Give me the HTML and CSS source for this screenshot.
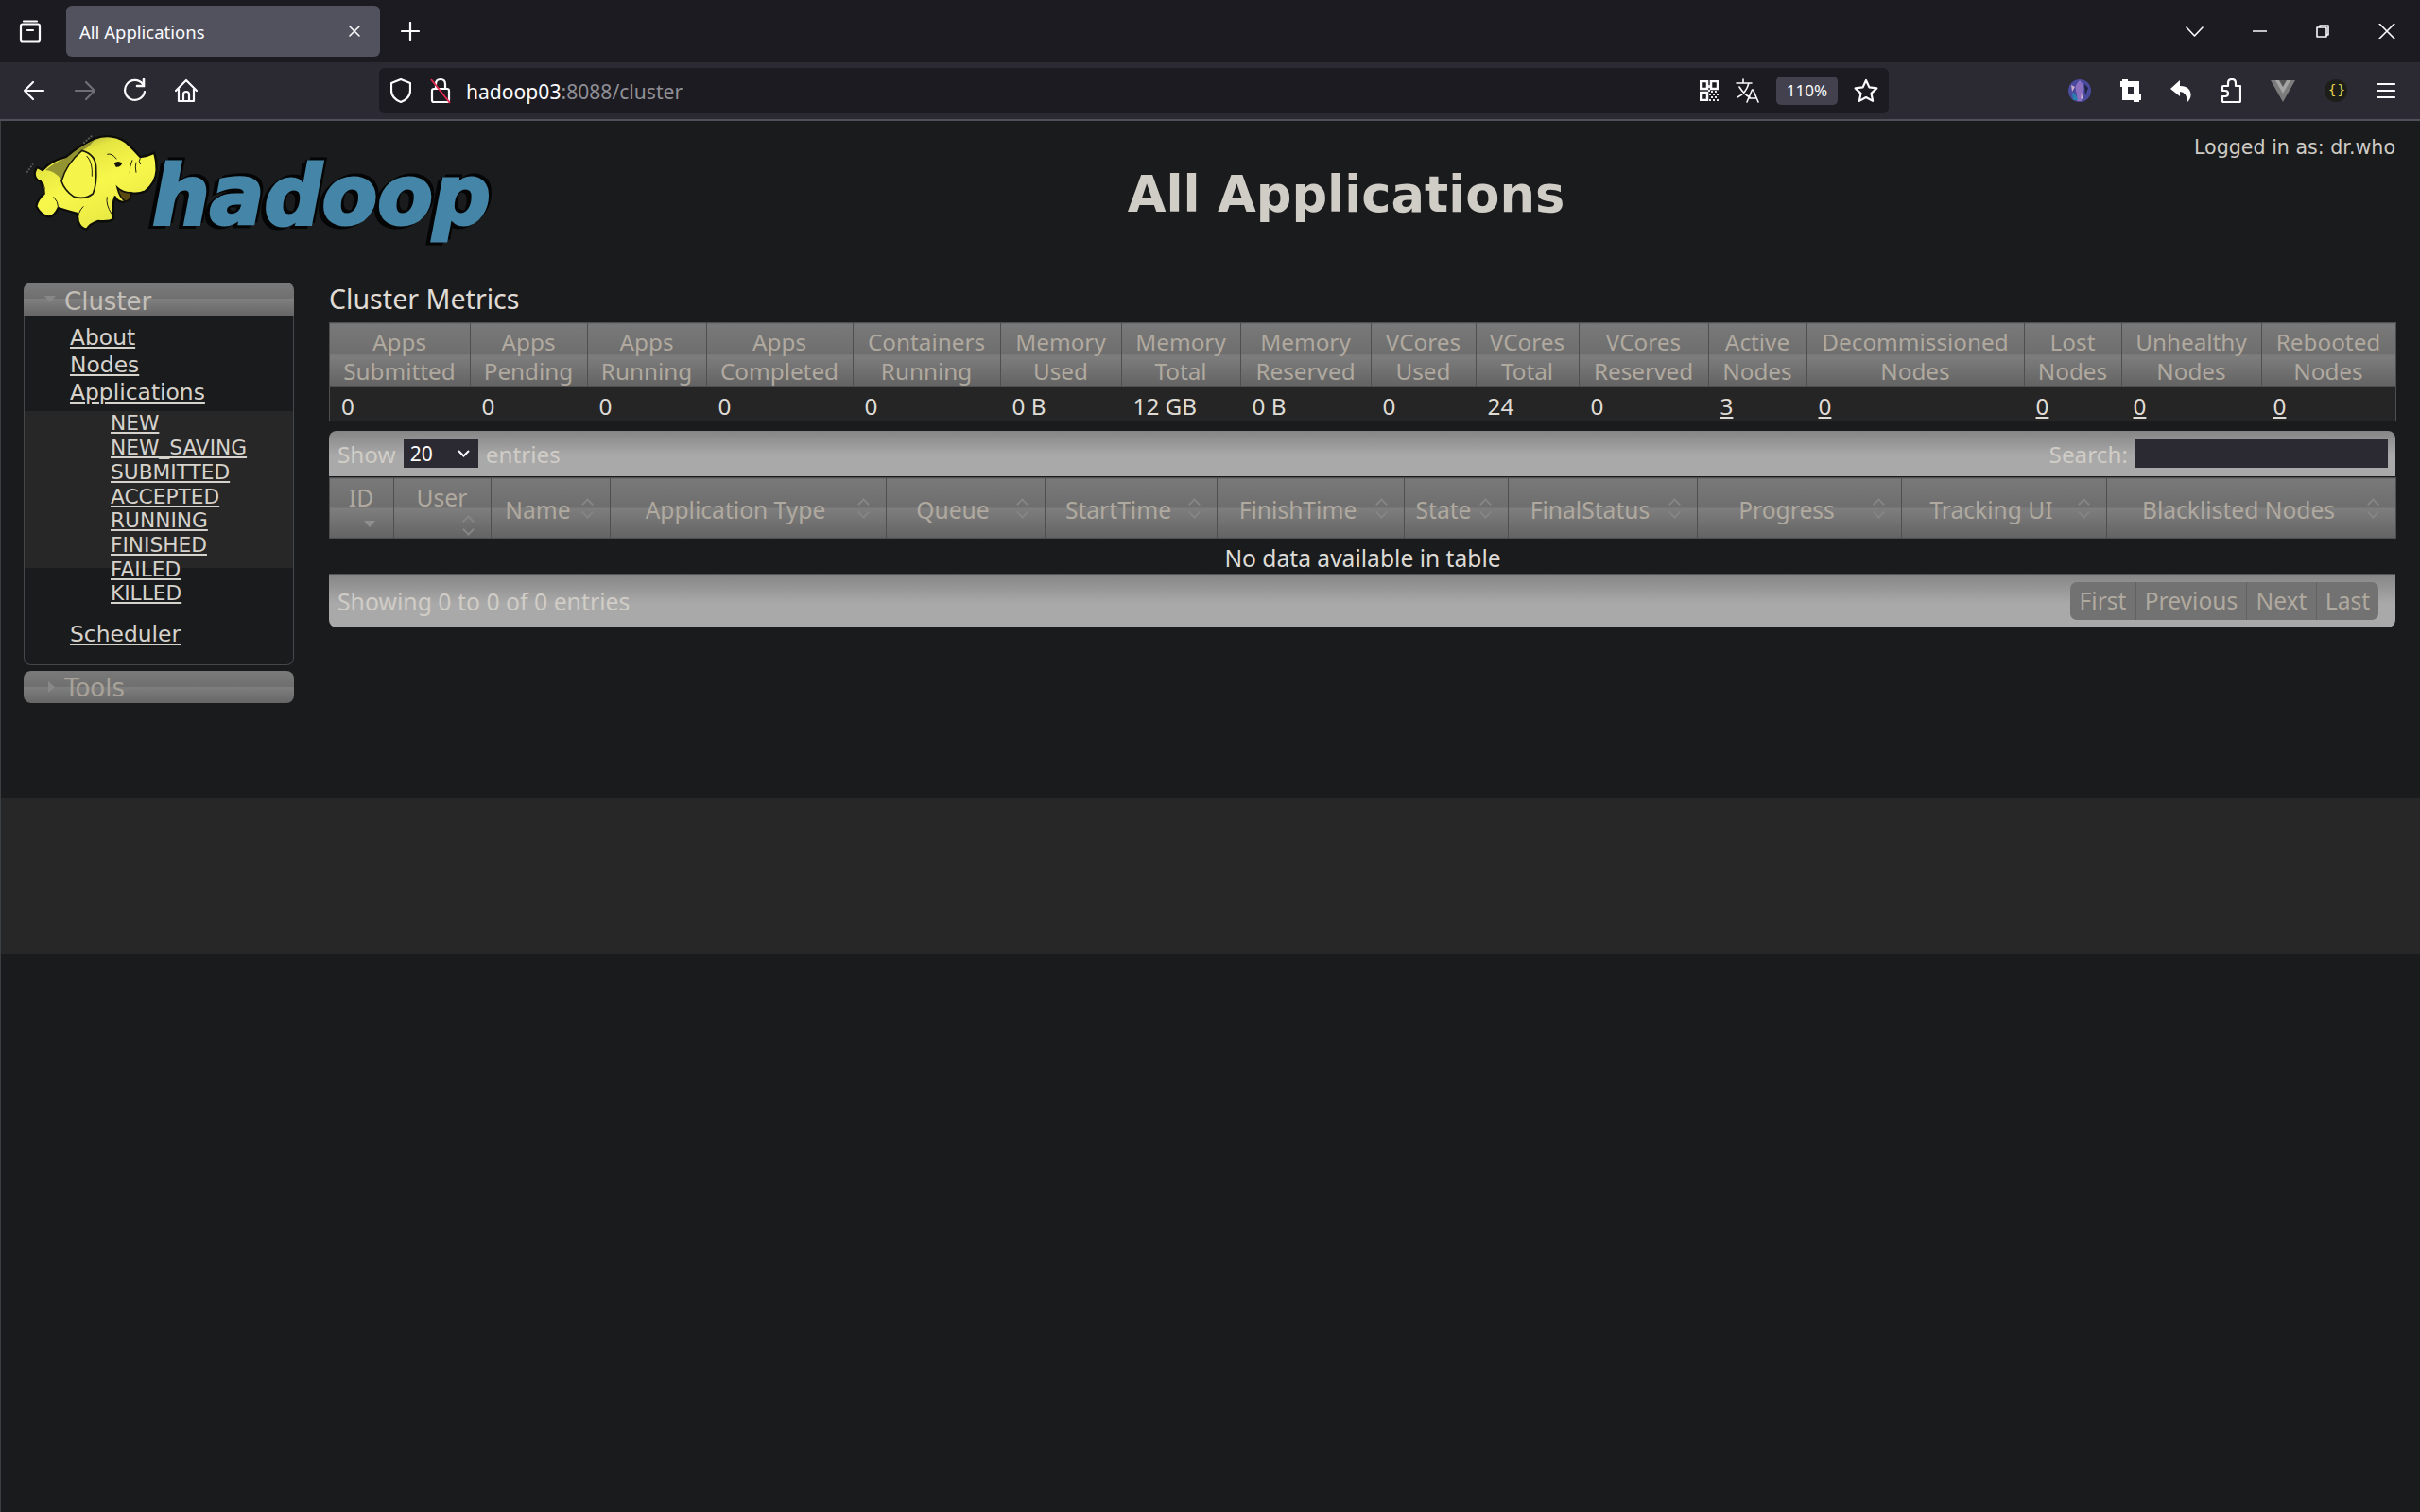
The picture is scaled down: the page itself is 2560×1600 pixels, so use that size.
FILE: index.html
```html
<!doctype html>
<html>
<head>
<title>All Applications</title>
<meta charset="utf-8">
<link rel="stylesheet" href="styles.css">
</head>
<body>
<!-- browser frame -->
<div class="tabstrip">
	<div class="tabside">
		<svg width="24" height="26" viewBox="0 0 24 26" class="ic"><path d="M5 2.500h14M2 7.500q0-2 2-2h16q2 0 2 2v14q0 2-2 2H4q-2 0-2-2zM9 12h6"/></svg>
	</div>
	<div class="tab">
		<span class="tabtitle">All Applications</span>
		<svg width="14" height="14" viewBox="0 0 14 14" class="ic thin"><path d="M2 2l10 10M12 2L2 12"/></svg>
	</div>
	<svg width="20" height="20" viewBox="0 0 20 20" class="ic newtab"><path d="M10 1v18M1 10h18"/></svg>
	<div class="winbtns">
		<svg width="19" height="11" viewBox="0 0 19 11" class="ic thin"><path d="M1 1l8.500 9L18 1"/></svg>
		<svg width="15" height="2" viewBox="0 0 15 2" class="ic thin"><path d="M0 1h15"/></svg>
		<svg width="14" height="14" viewBox="0 0 14 14" class="ic thin"><path d="M4 3V1h9v10h-2M1 3h10v10H1z"/></svg>
		<svg width="18" height="16" viewBox="0 0 18 16" class="ic thin"><path d="M1 0l16 16M17 0L1 16"/></svg>
	</div>
</div>
<div class="toolbar">
	<div class="navbtns">
		<svg width="24" height="22" viewBox="0 0 24 22" class="ic"><path d="M22 11H2M11 2l-9 9 9 9"/></svg>
		<svg width="24" height="22" viewBox="0 0 24 22" class="ic off"><path d="M2 11h20M13 2l9 9-9 9"/></svg>
		<svg width="24" height="26" viewBox="0 0 24 26" class="ic"><path d="M20 6a10.500 10.500 0 1 0 2 8"/><path d="M21 1v7h-7" class="solid"/></svg>
		<svg width="24" height="26" viewBox="0 0 24 26" class="ic"><path d="M1 13L12 2l11 11M4 11v13h16V11M9 24v-7q0-3 3-3t3 3v7"/></svg>
	</div>
	<div class="urlbar">
		<svg width="22" height="26" viewBox="0 0 22 26" class="ic"><path d="M11 1l10 4v8q0 8-10 12Q1 21 1 13V5z"/></svg>
		<svg width="22" height="28" viewBox="0 0 22 28" class="lock"><path d="M4 12h14q2 0 2 2v10q0 2-2 2H4q-2 0-2-2V14q0-2 2-2zM6 12V7q0-5 5-5t5 5v5" class="lockbody"/><path d="M1 2l20 25" class="lockslash"/></svg>
		<span class="url"><b>hadoop03</b>:8088/cluster</span>
		<svg width="20" height="22" viewBox="0 0 20 22" class="qr"><path d="M1 1h7v8H1zM12 1h7v8h-7zM1 13h7v8H1z" class="qrbox"/><path d="M9 5h2v3H9zM9 10h2v2H9zM12 11h2v2h-2zM16 11h2v2h-2zM10 14h2v2h-2zM14 14h2v2h-2zM18 14h2v2h-2zM12 17h2v2h-2zM16 17h2v2h-2zM10 20h2v2h-2zM14 20h2v2h-2zM18 20h2v2h-2z" class="qrdot"/></svg>
		<svg width="26" height="26" viewBox="0 0 26 26" class="ic thin trans"><path d="M1 5h16M8 1v4M14 5Q11 16 2 20M4 9q5 8 11 11M12 25l5.500-13h1l5.500 13M14 21h8"/></svg>
		<span class="zoompill">110%</span>
		<svg width="26" height="26" viewBox="0 0 26 26" class="ic star"><path d="M13 2l3.400 7.400 8 1-5.900 5.500 1.600 8L13 20l-7.100 3.900 1.600-8L1.600 10.400l8-1z"/></svg>
	</div>
	<div class="addons">
		<svg width="24" height="24" viewBox="0 0 24 24"><circle cx="12" cy="12" r="12" fill="#4a4a9c"/><path d="M12 1q6 6 4 12t-2 10h-5q1-6-1-11t4-11z" fill="#8a6fc0"/><path d="M4 14q4 0 6 8H5z" fill="#2a7fb0"/><path d="M17 5l4 4-3 8z" fill="#1d2340"/><path d="M3 6l4 2-3 5zM14 14l2 8-3-2z" fill="#c9a8c8"/></svg>
		<svg width="22" height="24" viewBox="0 0 22 24" class="crop"><path d="M5 0v19h17M0 5h17v19" /></svg>
		<svg width="22" height="24" viewBox="0 0 22 24"><path d="M10 1L0 10l10 8v-5q7 0 8 11 6-6 2-13-3-4-10-4z" fill="#fff"/></svg>
		<svg width="22" height="26" viewBox="0 0 22 26" class="ic"><path d="M8 5q0-4 4-4t4 4v3h5v16q0 1-1 1H3q-1 0-1-1v-5h3q3 0 3-3t-3-3H2V9q0-1 1-1h5z"/></svg>
		<svg width="26" height="24" viewBox="0 0 26 24"><path d="M0 1h26L13 24z" fill="#7c7c7c"/><path d="M6 1h14l-7 12z" fill="#555"/><path d="M5 1h4l4 7 4-7h4l-8 14z" fill="#a5a5a5"/></svg>
		<span class="jsonbtn">{ }</span>
		<svg width="20" height="18" viewBox="0 0 20 18" class="ic"><path d="M1 2h18M1 9h18M1 16h18"/></svg>
	</div>
</div>

<!-- the page -->
<div class="page">
	<div class="header">
		<svg class="logo" width="520" height="140" viewBox="0 0 520 140">
			<defs>
				<linearGradient id="hide" x1="0" y1="0" x2="0.5" y2="1">
					<stop offset="0" stop-color="#7f7f30"/>
					<stop offset="0.3" stop-color="#e6e642"/>
					<stop offset="0.6" stop-color="#f7f74b"/>
					<stop offset="1" stop-color="#e8e844"/>
				</linearGradient>
			</defs>
			<text x="141" y="107" textLength="358" lengthAdjust="spacingAndGlyphs" class="hadoop">hadoop</text>
			<g transform="scale(0.3333)">
				<path class="hide" d="M430 95Q437 120 437 150Q435 190 400 218Q375 228 355 222Q358 245 330 252Q312 250 305 235Q296 255 300 305Q290 315 250 312Q225 320 215 338Q195 335 188 312L184 288Q150 278 125 270Q115 295 95 298Q70 295 55 265Q58 245 80 225Q76 195 68 185Q50 182 50 160Q55 140 60 142L75 150Q100 120 150 108Q195 70 240 50Q295 30 340 62Q365 85 385 108Q410 105 430 95z"/>
				<path class="shade" d="M85 150Q115 125 150 112Q195 75 240 55Q215 85 195 90Q150 125 135 180Q110 150 85 150z"/>
				<path class="ear" d="M200 88Q245 100 245 145Q248 195 235 225Q210 245 175 235Q145 215 135 185Q150 130 200 88z"/>
				<path class="crease" d="M360 118Q350 140 352 160M372 125Q368 140 372 158M385 112Q378 122 386 132M280 100Q295 95 310 115M215 105Q235 125 232 170M295 290Q275 260 280 235M188 312Q185 285 205 265M125 270Q125 250 110 235M80 225Q85 205 76 190"/>
				<path class="eye" d="M302 128Q315 118 328 128Q322 142 308 140z"/>
				<path class="mouth" d="M312 205Q320 240 340 250Q358 240 355 222Q330 222 312 205z"/>
				<path class="hair" d="M205 65L235 38M25 158L45 130"/>
			</g>
		</svg>
		<h1 class="title">All Applications</h1>
		<div class="login">Logged in as: dr.who</div>
	</div>

	<div class="layout">
		<div class="nav">
			<div class="navhead"><i class="tri-down"></i>Cluster</div>
			<div class="navbody">
				<ul class="links">
					<li><a href="#">About</a></li>
					<li><a href="#">Nodes</a></li>
					<li><a href="#">Applications</a></li>
				</ul>
				<ul class="states">
					<li><a href="#">NEW</a></li>
					<li><a href="#">NEW_SAVING</a></li>
					<li><a href="#">SUBMITTED</a></li>
					<li><a href="#">ACCEPTED</a></li>
					<li><a href="#">RUNNING</a></li>
					<li><a href="#">FINISHED</a></li>
					<li><a href="#">FAILED</a></li>
					<li><a href="#">KILLED</a></li>
				</ul>
				<ul class="links">
					<li><a href="#">Scheduler</a></li>
				</ul>
			</div>
			<div class="navhead closed"><i class="tri-right"></i>Tools</div>
		</div>

		<div class="main">
			<div class="caption">Cluster Metrics</div>
			<table class="grid metrics">
				<colgroup>
					<col style="width:149px"><col style="width:124px"><col style="width:126px"><col style="width:155px"><col style="width:156px"><col style="width:128px"><col style="width:126px"><col style="width:138px"><col style="width:111px"><col style="width:109px"><col style="width:137px"><col style="width:104px"><col style="width:230px"><col style="width:103px"><col style="width:148px"><col style="width:142px">
				</colgroup>
				<thead>
					<tr>
						<th>Apps<br>Submitted</th><th>Apps<br>Pending</th><th>Apps<br>Running</th><th>Apps<br>Completed</th>
						<th>Containers<br>Running</th><th>Memory<br>Used</th><th>Memory<br>Total</th><th>Memory<br>Reserved</th>
						<th>VCores<br>Used</th><th>VCores<br>Total</th><th>VCores<br>Reserved</th><th>Active<br>Nodes</th>
						<th>Decommissioned<br>Nodes</th><th>Lost<br>Nodes</th><th>Unhealthy<br>Nodes</th><th>Rebooted<br>Nodes</th>
					</tr>
				</thead>
				<tbody>
					<tr>
						<td>0</td><td>0</td><td>0</td><td>0</td><td>0</td><td>0 B</td><td>12 GB</td><td>0 B</td><td>0</td><td>24</td><td>0</td>
						<td><a href="#">3</a></td><td><a href="#">0</a></td><td><a href="#">0</a></td><td><a href="#">0</a></td><td><a href="#">0</a></td>
					</tr>
				</tbody>
			</table>

			<div class="tablebar top">
				<div class="barleft">Show <span class="lenbox">20<svg width="13" height="8" viewBox="0 0 13 8"><path d="M1 1l5.500 5.500L12 1"/></svg></span> entries</div>
				<div class="barright">Search: <span class="searchbox"></span></div>
			</div>
			<table class="grid apps">
				<colgroup>
					<col style="width:68px"><col style="width:103px"><col style="width:126px"><col style="width:292px"><col style="width:168px"><col style="width:182px"><col style="width:198px"><col style="width:110px"><col style="width:200px"><col style="width:216px"><col style="width:217px"><col style="width:306px">
				</colgroup>
				<thead>
					<tr>
						<th class="wrap">ID<i class="sort-desc"></i></th>
						<th class="wrap">User<i class="sort"></i></th>
						<th>Name<i class="sort"></i></th>
						<th>Application Type<i class="sort"></i></th>
						<th>Queue<i class="sort"></i></th>
						<th>StartTime<i class="sort"></i></th>
						<th>FinishTime<i class="sort"></i></th>
						<th>State<i class="sort"></i></th>
						<th>FinalStatus<i class="sort"></i></th>
						<th>Progress<i class="sort"></i></th>
						<th>Tracking UI<i class="sort"></i></th>
						<th>Blacklisted Nodes<i class="sort"></i></th>
					</tr>
				</thead>
				<tbody>
					<tr><td colspan="12" class="empty">No data available in table</td></tr>
				</tbody>
			</table>
			<div class="tablebar bottom">
				<div class="barleft">Showing 0 to 0 of 0 entries</div>
				<div class="pager"><span class="pg-first">First</span><span class="pg-prev">Previous</span><span class="pg-next">Next</span><span class="pg-last">Last</span></div>
			</div>
		</div>
	</div>

	<div class="footband"></div>
</div>
</body>
</html>
```

FILE: styles.css
```css
html, body {
	margin: 0;
	padding: 0;
	background: #1a1b1d;
}

body {
	width: 2560px;
	height: 1600px;
	overflow: hidden;
	font-family: "DejaVu Sans", sans-serif;
	color: #e0dcd5;
}

a {
	color: #e0dcd5;
}

ul {
	list-style: none;
	margin: 0;
	padding: 0;
}

/* icons */
.ic {
	fill: none;
	stroke: #fbfbfe;
	stroke-width: 2.2;
	stroke-linejoin: round;
	stroke-linecap: round;
}
.ic.thin {
	stroke-width: 1.6;
}
.ic.off {
	stroke: #6f6e75;
}
.ic .solid {
	stroke-width: 2.6;
	stroke-linejoin: miter;
}

/* tab strip */
.tabstrip {
	height: 66px;
	background: #1c1b22;
	display: flex;
	align-items: center;
	font-family: "Noto Sans", sans-serif;
}
.tabside {
	width: 63px;
	height: 66px;
	border-right: 1px solid #46454d;
	display: flex;
	align-items: center;
	justify-content: center;
}
.tab {
	width: 332px;
	height: 54px;
	margin-left: 6px;
	box-sizing: border-box;
	padding: 0 20px 0 14px;
	background: #52525e;
	border-radius: 6px;
	display: flex;
	align-items: center;
	justify-content: space-between;
	color: #fbfbfe;
	font-size: 18.500px;
}
.newtab {
	margin-left: 22px;
}
.winbtns {
	margin-left: auto;
	padding-right: 26px;
	display: flex;
	align-items: center;
	gap: 52px;
}

/* nav toolbar */
.toolbar {
	height: 60px;
	background: #2b2a33;
	border-bottom: 2px solid #50505a;
	display: flex;
	align-items: center;
	font-family: "Noto Sans", sans-serif;
}
.navbtns {
	width: 401px;
	box-sizing: border-box;
	padding-left: 24px;
	display: flex;
	align-items: center;
	gap: 29.500px;
}
.urlbar {
	width: 1597px;
	height: 48px;
	box-sizing: border-box;
	padding: 0 11px 0 12px;
	background: #1c1b22;
	border-radius: 6px;
	display: flex;
	align-items: center;
}
.lock {
	margin-left: 20px;
}
.lockbody {
	fill: none;
	stroke: #fbfbfe;
	stroke-width: 2.2;
}
.lockslash {
	stroke: #e22850;
	stroke-width: 2;
}
.url {
	margin-left: 16px;
	font-size: 21.100px;
	color: #8f8f96;
}
.url b {
	font-weight: 400;
	color: #fbfbfe;
}
.qr {
	margin-left: auto;
}
.qrbox {
	fill: none;
	stroke: #fbfbfe;
	stroke-width: 2.5;
}
.qrdot {
	fill: #e8e8e8;
}
.trans {
	margin-left: 18px;
}
.zoompill {
	width: 65px;
	height: 30px;
	margin-left: 17px;
	background: #42414d;
	border-radius: 5px;
	color: #fbfbfe;
	font-size: 17px;
	line-height: 30px;
	text-align: center;
}
.star {
	margin-left: 17px;
}
.addons {
	width: 562px;
	box-sizing: border-box;
	padding: 0 26px 0 190px;
	display: flex;
	align-items: center;
	justify-content: space-between;
}
.crop {
	fill: none;
	stroke: #fff;
	stroke-width: 6;
}
.jsonbtn {
	width: 24px;
	height: 24px;
	border-radius: 50%;
	background: #1d1d1a;
	color: #e8d44d;
	font-family: "DejaVu Sans", sans-serif;
	font-size: 14px;
	letter-spacing: -2px;
	line-height: 23px;
	text-align: center;
}

/* page */
.page {
	border-left: 1px solid #3a3f44;
	height: 1472px;
	display: flex;
	flex-direction: column;
}
.header {
	height: 171px;
	display: flex;
	align-items: flex-start;
}
.logo {
	flex: none;
	margin-top: 2px;
	margin-left: 19px;
	margin-right: -15px;
}
.hide {
	fill: url(#hide);
	stroke: #0c0c08;
	stroke-width: 7;
	stroke-linejoin: round;
}
.shade {
	fill: #77772c;
	opacity: 0.75;
}
.ear {
	fill: #f4f44a;
	stroke: #1a1a0c;
	stroke-width: 5;
}
.crease {
	fill: none;
	stroke: #23230f;
	stroke-width: 3;
}
.eye {
	fill: #14140a;
}
.mouth {
	fill: #5a4a12;
	stroke: #12120a;
	stroke-width: 5;
}
.hair {
	fill: none;
	stroke: #55574f;
	stroke-width: 6;
	stroke-dasharray: 6 4;
}
.hadoop {
	font-family: "DejaVu Sans", sans-serif;
	font-weight: 700;
	font-style: oblique;
	font-size: 88px;
	fill: #4586a8;
	stroke: #4586a8;
	stroke-width: 3;
	filter: drop-shadow(-5px 3px 0 #050505) drop-shadow(3px -3px 0 #050505);
}
.title {
	flex: 1;
	margin: 50px 0 0 0;
	padding-left: 2px;
	font-size: 52.700px;
	line-height: 56px;
	font-weight: 700;
	text-align: center;
	color: #d0ccc6;
}
.login {
	flex: none;
	margin-top: 15px;
	margin-right: 26px;
	font-size: 20.600px;
	line-height: 26px;
	color: #cfcbc5;
}

.layout {
	display: flex;
	align-items: flex-start;
	height: 545px;
}

/* left accordion */
.nav {
	width: 286px;
	margin-left: 24px;
}
.nav a {
	color: #d6d2cc;
}
.navhead {
	height: 35px;
	box-sizing: border-box;
	padding-left: 43px;
	border-radius: 8px 8px 0 0;
	background: linear-gradient(#7a7a7a 0, #6f6f6f 50%, #7f7f7f 50%, #666 100%);
	font-size: 26px;
	line-height: 40px;
	color: #c4bfb8;
	position: relative;
}
.navhead.closed {
	margin-top: 6px;
	height: 34px;
	border-radius: 8px;
	color: #a8a299;
	line-height: 37px;
}
.tri-down {
	position: absolute;
	left: 22px;
	top: 14px;
	border: 6px solid transparent;
	border-top: 7px solid #888;
}
.tri-right {
	position: absolute;
	left: 26px;
	top: 11px;
	border: 6px solid transparent;
	border-left: 7px solid #888;
}
.navbody {
	height: 370px;
	box-sizing: border-box;
	padding-top: 9px;
	border: 1px solid #45484b;
	border-top: 0;
	border-radius: 0 0 8px 8px;
}
.links {
	padding-left: 48px;
	font-size: 23.400px;
	line-height: 28.800px;
}
.states {
	height: 166px;
	margin: 9px 0 56px;
	padding-left: 91px;
	background: #272727;
	font-size: 21.700px;
	line-height: 25.700px;
}
.states li:first-child {
	margin-top: -3px;
}

/* right side */
.main {
	width: 2186px;
	margin-left: 37px;
	font-family: "Noto Sans", sans-serif;
}
.caption {
	height: 42px;
	font-size: 28.600px;
	line-height: 33px;
	color: #e0dcd5;
}
.grid {
	width: 2186px;
	table-layout: fixed;
	border-collapse: collapse;
	font-size: 24.300px;
}
.grid th {
	position: relative;
	padding: 0;
	font-weight: 400;
	color: #b0a99f;
	text-align: center;
	background: linear-gradient(#797979 0, #6e6e6e 49%, #7e7e7e 50%, #636363 100%);
	border: 1px solid #4d4f51;
}
.grid td {
	padding: 5px 0 0 12px;
	font-size: 24.300px;
	line-height: 31px;
	color: #dedbd6;
}
.metrics th {
	height: 63px;
	padding: 3px 1px 0 0;
	line-height: 31px;
}
.metrics td {
	background: #252525;
	border-bottom: 1px solid #4d4f51;
}
.metrics td:first-child {
	border-left: 1px solid #4d4f51;
}
.metrics td:last-child {
	border-right: 1px solid #4d4f51;
}
.apps th {
	height: 58px;
	padding: 5px 27px 0 0;
	font-size: 24.600px;
	line-height: 30px;
}
.apps th.wrap {
	padding: 6px 1px 27px 0;
	height: 30px;
}
.grid td.empty {
	padding: 4px 0 0 0;
	font-size: 24.600px;
	text-align: center;
	background: #1a1b1d;
	line-height: 33px;
}
.sort, .sort-desc {
	position: absolute;
	right: 21px;
	top: 23px;
	width: 0;
	height: 0;
}
.sort::before, .sort::after {
	content: "";
	position: absolute;
	left: -7px;
	width: 9px;
	height: 9px;
	box-sizing: border-box;
	border: solid #858585;
	border-width: 2px 0 0 2px;
}
.sort::before {
	top: 0;
	transform: rotate(45deg);
}
.sort::after {
	top: 9px;
	transform: rotate(225deg);
}
.wrap .sort {
	top: 41px;
}
.sort-desc {
	top: 45px;
	right: 19px;
	border: 6px solid transparent;
	border-top: 7px solid #8f8f8f;
}

/* datatable top and bottom bars */
.tablebar {
	display: flex;
	align-items: center;
	justify-content: space-between;
	box-sizing: border-box;
	background: linear-gradient(#868686 0, #a9a9a9 55%, #a9a9a9 100%);
	color: #d0ccc6;
	font-size: 24.800px;
}
.tablebar.top {
	height: 48px;
	margin: 10px 0 1px;
	padding: 0 8px 0 9px;
	border-radius: 8px 8px 0 0;
	font-size: 24.300px;
}
.tablebar.bottom {
	height: 57px;
	padding: 0 18px 0 9px;
	border-radius: 0 0 8px 8px;
	border-top: 1px solid #555;
}
.barleft, .barright {
	display: flex;
	align-items: center;
	gap: 7px;
}
.top .barleft {
	gap: 8px;
}
.lenbox {
	width: 79px;
	height: 30px;
	box-sizing: border-box;
	padding: 0 9px 0 7px;
	background: #2b2a33;
	color: #fbfbfe;
	font-size: 21px;
	line-height: 30px;
	display: flex;
	align-items: center;
	justify-content: space-between;
}
.lenbox svg {
	fill: none;
	stroke: #fbfbfe;
	stroke-width: 2;
}
.searchbox {
	width: 268px;
	height: 30px;
	background: #2b2a33;
}
.pager {
	display: flex;
	height: 40px;
	border-radius: 7px;
	overflow: hidden;
	background: #727272;
	color: #b0a99f;
	font-size: 24.600px;
	line-height: 40px;
	text-align: center;
}
.pager span {
	box-sizing: border-box;
	border-left: 1px solid #626262;
}
.pager .pg-first {
	width: 69px;
	border-left: 0;
}
.pager .pg-prev {
	width: 117px;
}
.pager .pg-next {
	width: 74px;
}
.pager .pg-last {
	width: 66px;
}

.footband {
	height: 166px;
	background: #272727;
}
```
